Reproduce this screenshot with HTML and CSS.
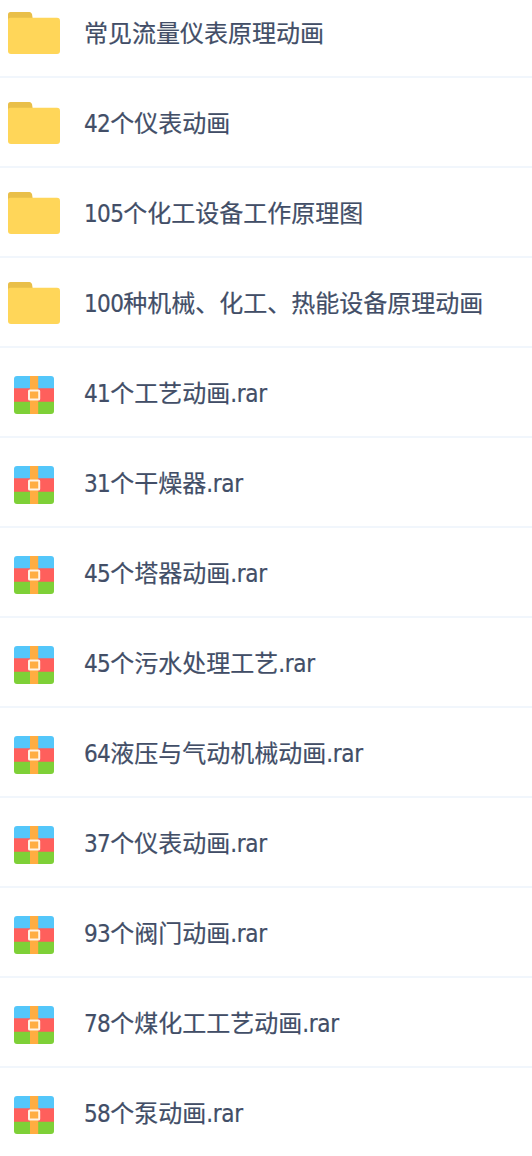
FILE: index.html
```html
<!DOCTYPE html>
<html lang="zh-CN">
<head>
<meta charset="utf-8">
<title>文件列表</title>
<link rel="stylesheet" href="styles.css">
</head>
<body>
<svg class="defs" width="0" height="0">
  <symbol id="folder" viewBox="0 0 52 42">
    <path fill="#e9bf49" d="M0 2.5Q0 0 2.5 0H21.5Q23 0 24 2L24.6 6V12H0Z"/>
    <path fill="#ffd659" d="M0 8Q0 5.8 2.5 5.8H49Q52 5.8 52 8.8V39Q52 42 49 42H3Q0 42 0 39Z"/>
  </symbol>
  <symbol id="rar" viewBox="0 0 40 38">
    <path fill="#54c7fa" d="M0 3Q0 0 3 0H37Q40 0 40 3V13H0Z"/>
    <path fill="#ff5f5c" d="M0 12.3H40V26H0Z"/>
    <path fill="#7ed037" d="M0 25.7H40V35Q40 38 37 38H3Q0 38 0 35Z"/>
    <path fill="#ffad41" d="M16 0H24.2V38H16Z"/>
    <rect x="15" y="14.4" width="10.2" height="9.2" rx=".6" fill="#ffad41" stroke="#fff1e2" stroke-width="2"/>
  </symbol>
</svg>
<ul class="files">
  <li class="row"><svg class="folder"><use href="#folder"/></svg><span class="name">常见流量仪表原理动画</span></li>
  <li class="row"><svg class="folder"><use href="#folder"/></svg><span class="name"><span class="num">42</span>个仪表动画</span></li>
  <li class="row"><svg class="folder"><use href="#folder"/></svg><span class="name"><span class="num">105</span>个化工设备工作原理图</span></li>
  <li class="row"><svg class="folder"><use href="#folder"/></svg><span class="name"><span class="num">100</span>种机械、化工、热能设备原理动画</span></li>
  <li class="row"><svg class="rar"><use href="#rar"/></svg><span class="name"><span class="num">41</span>个工艺动画<span class="ext">.rar</span></span></li>
  <li class="row"><svg class="rar"><use href="#rar"/></svg><span class="name"><span class="num">31</span>个干燥器<span class="ext">.rar</span></span></li>
  <li class="row"><svg class="rar"><use href="#rar"/></svg><span class="name"><span class="num">45</span>个塔器动画<span class="ext">.rar</span></span></li>
  <li class="row"><svg class="rar"><use href="#rar"/></svg><span class="name"><span class="num">45</span>个污水处理工艺<span class="ext">.rar</span></span></li>
  <li class="row"><svg class="rar"><use href="#rar"/></svg><span class="name"><span class="num">64</span>液压与气动机械动画<span class="ext">.rar</span></span></li>
  <li class="row"><svg class="rar"><use href="#rar"/></svg><span class="name"><span class="num">37</span>个仪表动画<span class="ext">.rar</span></span></li>
  <li class="row"><svg class="rar"><use href="#rar"/></svg><span class="name"><span class="num">93</span>个阀门动画<span class="ext">.rar</span></span></li>
  <li class="row"><svg class="rar"><use href="#rar"/></svg><span class="name"><span class="num">78</span>个煤化工工艺动画<span class="ext">.rar</span></span></li>
  <li class="row"><svg class="rar"><use href="#rar"/></svg><span class="name"><span class="num">58</span>个泵动画<span class="ext">.rar</span></span></li>
</ul>
</body>
</html>
```

FILE: styles.css
```css
body { margin: 0; height: 1156px; overflow: hidden; background: #fff; }
.defs { display: block; height: 0; }
.files { margin: -12px 0 0; padding: 0; list-style: none; }
.row {
  display: flex;
  align-items: center;
  box-sizing: border-box;
  height: 90px;
  padding: 2px 0 0 8px;
  border-bottom: 2px solid #f1f6fc;
  color: #424e67;
  font: 24px/36px "Noto Sans", "Noto Sans CJK SC", sans-serif;
  white-space: nowrap;
}
.row:last-child { border-bottom-color: transparent; }
.folder { width: 52px; height: 42px; margin-right: 24px; }
.rar { width: 40px; height: 38px; margin: 3px 30px 0 6px; }
.name { -webkit-text-stroke: 0.2px #424e67; }
.num, .ext {
  font-family: "DejaVu Sans Condensed", "DejaVu Sans", sans-serif;
  font-stretch: condensed;
  line-height: 1;
}
.num { letter-spacing: -0.65px; }
.ext { letter-spacing: -0.3px; }
```
